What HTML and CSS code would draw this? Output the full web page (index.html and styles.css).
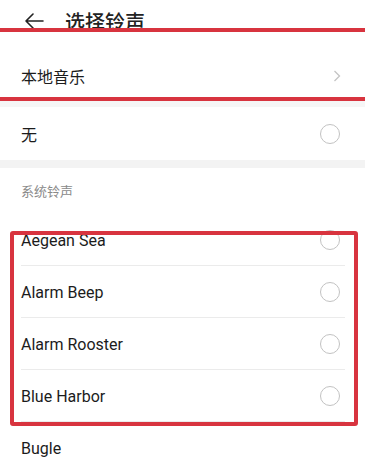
FILE: index.html
```html
<!DOCTYPE html>
<html lang="zh-CN">
<head>
  <meta charset="UTF-8" />
  <meta name="viewport" content="width=device-width, initial-scale=1.0"/>
  <title>选择铃声</title>
  <link rel="stylesheet" href="styles.css">
</head>
<body>

<div class="page">
  <div class="title-bar">
    <svg class="back-icon" width="20" height="16" viewBox="0 0 20 16">
      <path d="M19 8H2M9 1L2 8l7 7" fill="none" stroke="#222" stroke-width="1.6" stroke-linecap="round" stroke-linejoin="round"/>
    </svg>
    <h1>选择铃声</h1>
  </div>

  <div class="row local-row">
    <span>本地音乐</span>
    <svg class="chevron" width="8" height="12" viewBox="0 0 8 12">
      <path d="M1.5 1l5 5-5 5" fill="none" stroke="#c4c4c4" stroke-width="1.3"/>
    </svg>
  </div>

  <div class="band thin"></div>

  <div class="row none-row">
    <span>无</span>
    <span class="radio"></span>
  </div>

  <div class="band"></div>

  <div class="section-title">系统铃声</div>

  <ul class="ring-list">
    <li class="row"><span>Aegean Sea</span><span class="radio"></span></li>
    <li class="row"><span>Alarm Beep</span><span class="radio"></span></li>
    <li class="row"><span>Alarm Rooster</span><span class="radio"></span></li>
    <li class="row"><span>Blue Harbor</span><span class="radio"></span></li>
    <li class="row"><span>Bugle</span></li>
  </ul>

  <!-- annotation boxes drawn over the screenshot -->
  <div class="mark mark-local"></div>
  <div class="mark mark-list"></div>
</div>

</body>
</html>
```

FILE: styles.css
```css
body {
  margin: 0;
  font-family: Roboto, "Noto Sans CJK SC", sans-serif;
  background-color: white;
  color: #1c1c1c;
  overflow: hidden;
}
.page {
  position: relative;
  width: 365px;
  height: 461px;
  overflow: hidden;
}
.title-bar {
  display: flex;
  align-items: center;
  height: 42px;
  padding: 0 0 8px 24px;
}
.back-icon {
  margin-right: 21px;
}
.title-bar h1 {
  margin: 0;
  font-size: 20px;
  font-weight: 500;
  color: #222;
}
.row {
  display: flex;
  align-items: center;
  justify-content: space-between;
  padding: 0 25px 0 21px;
  font-size: 16px;
}
.local-row {
  height: 51px;
}
.chevron {
  margin-right: -1px;
}
.none-row {
  height: 53px;
}
.band {
  height: 8px;
  background-color: #f3f3f3;
}
.band.thin {
  height: 6px;
  background-color: #f6f6f6;
}
.section-title {
  height: 46px;
  line-height: 48px;
  padding-left: 21px;
  font-size: 13px;
  color: #8a8a8a;
}
.ring-list {
  list-style: none;
  margin: 0;
  padding: 0;
}
.ring-list .row {
  position: relative;
  height: 52px;
}
.ring-list .row::after {
  content: "";
  position: absolute;
  left: 21px;
  right: 20px;
  bottom: 0;
  height: 1px;
  background-color: #ebebeb;
}
.radio {
  width: 18px;
  height: 18px;
  border: 1.3px solid #c2c2c2;
  border-radius: 50%;
}
.mark {
  position: absolute;
  border: 4px solid #d8343f;
}
.mark-local {
  top: 28px;
  left: -6px;
  right: -6px;
  height: 65px;
}
.mark-list {
  top: 231px;
  left: 10px;
  width: 340px;
  height: 187px;
  border-radius: 3px;
}
```
